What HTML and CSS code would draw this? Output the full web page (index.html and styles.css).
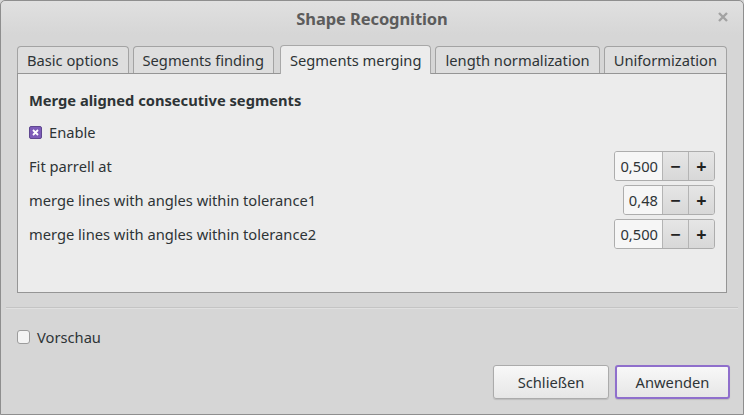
FILE: index.html
```html
<!DOCTYPE html>
<html>
<head>
<meta charset="utf-8">
<link rel="stylesheet" href="styles.css">
</head>
<body>
<div class="window">
  <div class="titlebar">
    <span class="title">Shape Recognition</span>
    <svg class="close" width="10" height="10" viewBox="0 0 10 10"><path d="M1 1L9 9M9 1L1 9" stroke="#a2a2a2" stroke-width="2.4"/></svg>
  </div>
  <div class="content">
    <div class="tabs">
      <div class="tab">Basic options</div>
      <div class="tab">Segments finding</div>
      <div class="tab active">Segments merging</div>
      <div class="tab">length normalization</div>
      <div class="tab">Uniformization</div>
    </div>
    <div class="panel">
      <div class="heading">Merge aligned consecutive segments</div>
      <label class="check-row">
        <span class="checkbox checked"><svg width="7" height="7" viewBox="0 0 7 7"><path d="M1 1L6 6M6 1L1 6" stroke="#fff" stroke-width="1.8"/></svg></span>
        <span>Enable</span>
      </label>
      <div class="row">
        <span>Fit parrell at</span>
        <div class="spin"><span class="val">0,500</span><span class="btn">−</span><span class="btn">+</span></div>
      </div>
      <div class="row">
        <span>merge lines with angles within tolerance1</span>
        <div class="spin"><span class="val">0,48</span><span class="btn">−</span><span class="btn">+</span></div>
      </div>
      <div class="row">
        <span>merge lines with angles within tolerance2</span>
        <div class="spin"><span class="val">0,500</span><span class="btn">−</span><span class="btn">+</span></div>
      </div>
    </div>
    <div class="sep"></div>
    <label class="preview">
      <span class="checkbox"></span>
      <span>Vorschau</span>
    </label>
    <div class="buttons">
      <button class="button">Schließen</button>
      <button class="button default">Anwenden</button>
    </div>
  </div>
</div>
</body>
</html>
```
FILE: styles.css
```css
html, body {
  margin: 0;
  padding: 0;
  background: #d6d6d6;
}
body {
  font-family: "Noto Sans", sans-serif;
  font-size: 14.7px;
  color: #2e3436;
}
.window {
  width: 744px;
  height: 415px;
  box-sizing: border-box;
  background: #d6d6d6;
  border: 1px solid #8e8e8e;
  border-radius: 5px 5px 0 0;
  display: flex;
  flex-direction: column;
}
.titlebar {
  height: 34px;
  display: flex;
  align-items: center;
  justify-content: center;
  position: relative;
  background: linear-gradient(#e0e0e0, #d6d6d6);
  border-radius: 5px 5px 0 0;
}
.title {
  font-weight: bold;
  font-size: 16.5px;
  color: #5c5c5c;
  margin-top: 1px;
  letter-spacing: -0.1px;
}
.close {
  position: absolute;
  right: 15px;
  top: 11px;
}
.content {
  padding: 10px 16px 0 16px;
  display: flex;
  flex-direction: column;
}
.tabs {
  display: flex;
  gap: 4px;
  align-items: flex-end;
  height: 28px;
}
.tab {
  flex: 1 1 auto;
  height: 27px;
  box-sizing: border-box;
  padding: 0 0 0 0;
  border: 1px solid #a3a3a3;
  border-bottom: none;
  border-radius: 4px 4px 0 0;
  background: #dedede;
  display: flex;
  align-items: center;
  justify-content: center;
  color: #2e3436;
  line-height: 1;
  padding-top: 1px;
}
.tab.active {
  background: #ececec;
  margin-left: 2px;
  border-color: #a8a8a8;
  position: relative;
  z-index: 1;
  margin-bottom: -1px;
  height: 29px;
}
.panel {
  height: 220px;
  box-sizing: border-box;
  background: #ececec;
  border: 1px solid #959595;
  padding: 16px 11px 0 11px;
  display: flex;
  flex-direction: column;
}
.heading {
  font-weight: bold;
  height: 20px;
  line-height: 20px;
}
.check-row {
  display: flex;
  align-items: center;
  gap: 7px;
  height: 20px;
  margin-top: 12px;
}
.checkbox {
  width: 13px;
  height: 13px;
  box-sizing: border-box;
  border: 1px solid #9c9c9c;
  border-radius: 2px;
  background: #f4f4f4;
  display: inline-flex;
  align-items: center;
  justify-content: center;
}
.checkbox.checked {
  background: #7d5cb8;
  border-color: #5f4790;
}
.row {
  display: flex;
  justify-content: space-between;
  align-items: center;
  height: 30px;
  margin-top: 4px;
}
.check-row + .row { margin-top: 9px; }
.spin {
  display: flex;
  height: 30px;
  box-sizing: border-box;
  border: 1px solid #adadad;
  border-radius: 3px;
  overflow: hidden;
  margin-right: 0;
}
.val {
  background: #f6f6f6;
  padding: 0 4px 0 5px;
  display: flex;
  align-items: center;
  border-right: 1px solid #b4b4b4;
}
.btn {
  width: 25px;
  display: flex;
  align-items: center;
  justify-content: center;
  background: linear-gradient(#e6e6e6, #d8d8d8);
  font-weight: bold;
  font-size: 18px;
  color: #222;
}
.btn + .btn {
  border-left: 1px solid #b4b4b4;
}
.sep {
  height: 1px;
  background: #c4c4c4;
  margin: 14px -11px 0 -11px;
  border-bottom: 1px solid #e0e0e0;
}
.preview {
  display: flex;
  align-items: center;
  gap: 7px;
  margin-top: 18px;
  height: 20px;
}
.preview .checkbox {
  width: 13px;
  height: 14px;
  border-radius: 3px;
}
.buttons {
  display: flex;
  justify-content: flex-end;
  gap: 6px;
  margin-top: 18px;
  margin-right: -3px;
}
.button {
  font-family: "Noto Sans", sans-serif;
  font-size: 14.7px;
  color: #2e3436;
  width: 116px;
  height: 34px;
  border: 1px solid #ababab;
  border-radius: 3px;
  background: linear-gradient(#f8f8f8, #e6e6e6);
  box-shadow: 0 1px 1px rgba(0,0,0,0.12);
}
.button.default {
  width: 115px;
  border: 2px solid #8f6fcc;
}
```
